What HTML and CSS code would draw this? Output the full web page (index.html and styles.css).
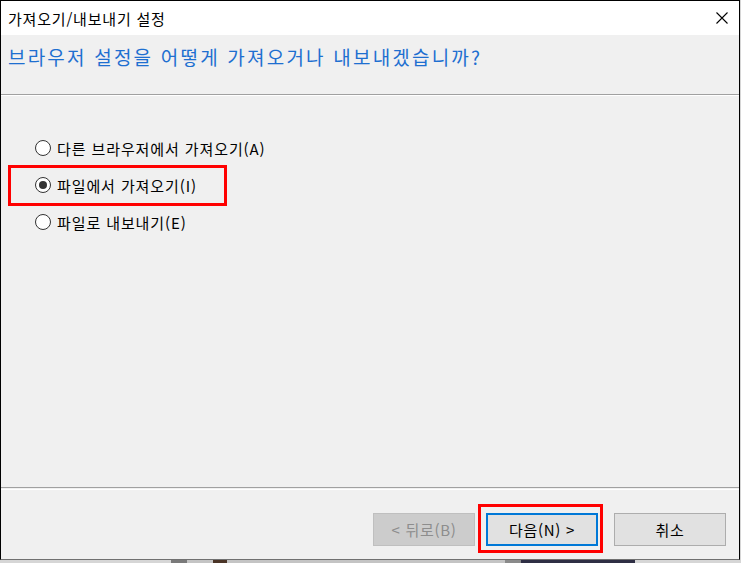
FILE: index.html
```html
<!DOCTYPE html>
<html lang="ko">
<head>
<meta charset="utf-8">
<title>가져오기/내보내기 설정</title>
<link rel="stylesheet" href="styles.css">
</head>
<body>
<div class="window">
  <div class="titlebar">
    <span class="title">가져오기/내보내기 설정</span>
    <svg class="close" width="12" height="12" viewBox="0 0 12 12"><path d="M0.5 0.5 L11.5 11.5 M11.5 0.5 L0.5 11.5" stroke="#000" stroke-width="1.1" fill="none"/></svg>
  </div>
  <div class="header">
    <h1 class="heading">브라우저 설정을 어떻게 가져오거나 내보내겠습니까?</h1>
  </div>
  <div class="content">
    <label class="option"><span class="radio"></span><span class="label">다른 브라우저에서 가져오기(A)</span></label>
    <label class="option marked"><span class="radio checked"></span><span class="label">파일에서 가져오기(I)</span></label>
    <label class="option"><span class="radio"></span><span class="label">파일로 내보내기(E)</span></label>
  </div>
  <div class="footer">
    <div class="footer-inner">
      <button class="btn btn-back" disabled>&lt; 뒤로(B)</button>
      <button class="btn btn-next">다음(N) &gt;</button>
      <button class="btn btn-cancel">취소</button>
    </div>
  </div>
</div>
<div class="desktop">
  <span class="seg seg-a"></span>
  <span class="seg seg-b"></span>
  <span class="seg seg-c"></span>
  <span class="seg seg-d"></span>
  <span class="seg seg-e"></span>
  <span class="seg seg-f"></span>
  <span class="seg seg-g"></span>
  <span class="seg seg-h"></span>
</div>
</body>
</html>
```

FILE: styles.css
```css
* { box-sizing: border-box; }
html, body { margin: 0; padding: 0; }
body {
  width: 741px;
  height: 563px;
  overflow: hidden;
  background: #d6d6d6;
  font-family: "Noto Sans CJK KR", "Noto Sans", sans-serif;
}
.window {
  width: 740px;
  height: 560px;
  border: 1px solid #000;
  border-bottom-color: #707070;
  background: #f0f0f0;
  display: flex;
  flex-direction: column;
}
.titlebar {
  height: 34px;
  flex: none;
  background: #fff;
  display: flex;
  align-items: center;
  justify-content: space-between;
  padding: 0 11px 0 7px;
}
.title {
  font-size: 15px;
  letter-spacing: 0.8px;
  color: #000;
}
.close { display: block; }
.header {
  height: 60px;
  flex: none;
  border-bottom: 1px solid #a0a0a0;
  padding: 10px 0 0 7px;
}
.heading {
  margin: 0;
  font-weight: normal;
  font-size: 19px;
  line-height: 24px;
  letter-spacing: 2.2px;
  color: #1e6fd0;
}
.content {
  flex: 1;
  border-top: 1px solid #fff;
  padding: 42px 0 0 34px;
  display: flex;
  flex-direction: column;
  align-items: flex-start;
  gap: 17px;
}
.option {
  position: relative;
  display: flex;
  align-items: center;
  height: 20px;
  gap: 6px;
  font-size: 15px;
  letter-spacing: 0.9px;
  color: #000;
}
.radio {
  width: 16px;
  height: 16px;
  flex: none;
  border: 1px solid #333;
  border-radius: 50%;
  background: #fff;
  display: flex;
  align-items: center;
  justify-content: center;
}
.radio.checked::after {
  content: "";
  width: 8px;
  height: 8px;
  border-radius: 50%;
  background: #333;
}
.marked::after {
  content: "";
  position: absolute;
  left: -27px;
  top: -10px;
  width: 213px;
  height: 35px;
  border: 3px solid #f00;
}
.footer {
  height: 72px;
  flex: none;
  border-top: 1px solid #a0a0a0;
  padding-top: 1px;
}
.footer-inner {
  height: 100%;
  border-top: 1px solid #fff;
  display: flex;
  justify-content: flex-end;
  align-items: flex-start;
  padding: 23px 13px 0 0;
}
.btn {
  position: relative;
  height: 33px;
  width: 112px;
  font-family: inherit;
  font-size: 15px;
  letter-spacing: 0.7px;
  background: #e1e1e1;
  border: 1px solid #adadad;
  color: #000;
  padding: 0;
  margin: 0;
}
.btn-back {
  width: 102px;
  margin-right: 11px;
  background: #cccccc;
  border-color: #bfbfbf;
  color: #8d8d8d;
}
.btn-next {
  border: 2px solid #0078d7;
  margin-right: 16px;
}
.btn-next::after {
  content: "";
  position: absolute;
  left: -10px;
  top: -11px;
  right: -7px;
  bottom: -9px;
  border: 3px solid #f00;
}
.desktop {
  display: flex;
  height: 3px;
}
.seg { display: block; height: 3px; }
.seg-a { width: 171px; background: #d6d6d6; }
.seg-b { width: 16px; background: #7a7a7a; }
.seg-c { width: 26px; background: #c4c4c4; }
.seg-d { width: 14px; background: #4a3426; }
.seg-e { width: 278px; background: #c4c4c4; }
.seg-f { width: 16px; background: #8a8a8a; }
.seg-g { width: 114px; background: #2e2e44; }
.seg-h { flex: 1; background: #d6d6d6; }
```
